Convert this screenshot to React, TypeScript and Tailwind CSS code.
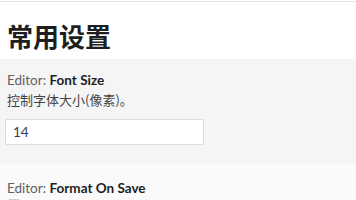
import { useState } from 'react'

const latin = { fontFamily: 'Lato, "Noto Sans CJK SC", sans-serif' }
const cjk = { fontFamily: '"Noto Sans CJK SC", sans-serif' }

export default function App() {
  const [size, setSize] = useState('14')
  const [fmt, setFmt] = useState(false)

  return (
    <div className="w-[356px] h-[200px] overflow-hidden bg-white pt-px" style={latin}>
      <div className="border-t border-[#e5e5e5]">
        <h1 className="px-[7px] pt-[16px] h-[57px] text-[26px] leading-[36px] font-bold text-[#1e1e1e]" style={cjk}>
          常用设置
        </h1>

        <div className="bg-[#f5f5f5] px-[5px] pt-[11px] h-[105px]">
          <div className="px-[2px] text-[13.5px] leading-[20px] text-[#616161]">
            Editor: <span className="font-bold text-[#1e1e1e]">Font Size</span>
          </div>
          <div className="px-[2px] text-[13px] leading-[20px] text-[#444]" style={cjk}>
            控制字体大小(像素)。
          </div>
          <input
            value={size}
            onChange={e => setSize(e.target.value)}
            className="mt-[9px] w-[199px] h-[26px] px-[7px] bg-white border border-[#dcdcdc] rounded-[2px] text-[13.5px] text-[#3b3b4f] outline-none"
            style={latin}
          />
        </div>

        <div className="bg-[#fafafa] px-[7px] pt-[14px] h-[60px]">
          <div className="text-[13.5px] leading-[20px] text-[#616161]">
            Editor: <span className="font-bold text-[#1e1e1e]">Format On Save</span>
          </div>
          <label className="mt-[1px] flex items-center gap-2 text-[13px]">
            <input
              type="checkbox"
              checked={fmt}
              onChange={e => setFmt(e.target.checked)}
              className="w-[14px] h-[14px] appearance-none border border-[#cecece] rounded-[3px] bg-white"
            />
          </label>
        </div>
      </div>
    </div>
  )
}
